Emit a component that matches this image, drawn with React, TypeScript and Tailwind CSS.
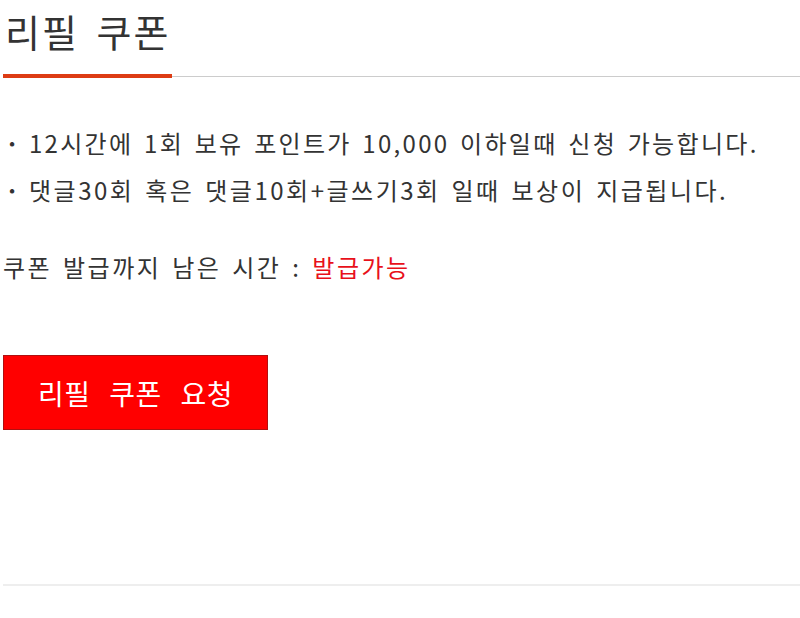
export default function App() {
  const font = { fontFamily: '"Noto Sans CJK KR", "Noto Sans", sans-serif' };
  return (
    <div className="w-[800px] h-[618px] bg-white pl-[3px] text-[#333]" style={font}>
      {/* section heading with accent underline */}
      <div className="flex border-b border-[#cccccc] pt-[6px]">
        <h2 className="inline-block w-[169px] border-b-4 border-[#dd3c14] -mb-[2px] pl-[2px] pb-[18px] text-[38px] leading-[50px] font-normal text-[#333] tracking-[2px] [word-spacing:7px] whitespace-nowrap">
          리필 쿠폰
        </h2>
      </div>

      <ul className="mt-[51px] flex flex-col gap-[18px] text-[24px] leading-[29px] tracking-[2.3px] [word-spacing:3px]">
        <li className="flex">
          <span className="w-[26px] pl-[2px] font-bold">·</span>
          <span>12시간에 1회 보유 포인트가 10,000 이하일때 신청 가능합니다.</span>
        </li>
        <li className="flex">
          <span className="w-[26px] pl-[2px] font-bold">·</span>
          <span className="tracking-[2.5px]">댓글30회 혹은 댓글10회+글쓰기3회 일때 보상이 지급됩니다.</span>
        </li>
      </ul>

      <p className="mt-[48px] text-[24px] leading-[29px] tracking-[2.5px] [word-spacing:3px]">
        쿠폰 발급까지 남은 시간 : <span className="text-[#e8101a]">발급가능</span>
      </p>

      <button className="mt-[74px] flex h-[75px] w-[265px] items-center justify-center border border-[#b01010] bg-[#ff0000] text-[28px] text-white tracking-[0.5px] [word-spacing:12px]">
        리필 쿠폰 요청
      </button>

      <div className="mt-[154px] h-[2px] bg-[#eeeeee]" />
    </div>
  );
}
